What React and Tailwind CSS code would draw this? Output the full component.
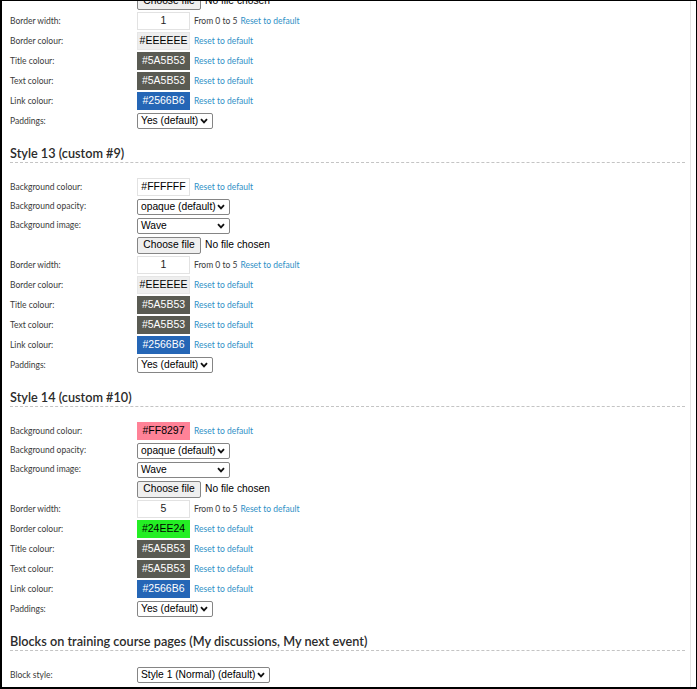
const LINK = 'text-[#2f90c6]';

function Label({ children }) {
  return <div className="w-[127px] shrink-0 text-[8.5px] text-[#3a3a3a]">{children}</div>;
}

function Reset() {
  return <span className={`ml-[4px] text-[8.5px] ${LINK}`}>Reset to default</span>;
}

function Chevron() {
  return (
    <svg width="8" height="6" viewBox="0 0 8 6" className="ml-auto shrink-0">
      <path d="M1 1.2 L4 4.4 L7 1.2" fill="none" stroke="#111" strokeWidth="1.8" />
    </svg>
  );
}

function Select({ value, width }) {
  return (
    <div
      className={`flex h-[16px] items-center rounded-[2px] border border-[#858585] bg-white pl-[3px] pr-[4px] text-[10.25px] text-black ${width}`}
      style={{ fontFamily: '"Liberation Sans", Arial, sans-serif' }}
    >
      <span className="whitespace-nowrap">{value}</span>
      <Chevron />
    </div>
  );
}

function ColourBox({ value, bg, text, border }) {
  return (
    <div
      className={`flex h-[18px] w-[53px] items-center justify-center border text-[10.5px] ${bg} ${text} ${border}`}
      style={{ fontFamily: '"Liberation Sans", Arial, sans-serif' }}
    >
      {value}
    </div>
  );
}

function Row({ label, h = 'h-[20px]', children }) {
  return (
    <div className={`flex items-center ${h}`}>
      <Label>{label}</Label>
      <div className="flex items-center">{children}</div>
    </div>
  );
}

function ColourRow({ label, value, bg, text, border }) {
  return (
    <Row label={label}>
      <ColourBox value={value} bg={bg} text={text} border={border} />
      <Reset />
    </Row>
  );
}

function FileRow() {
  return (
    <Row label="">
      <div
        className="flex h-[17px] w-[64px] items-center justify-center rounded-[2px] border border-[#858585] bg-[#efefef] text-[10.25px] text-black"
        style={{ fontFamily: '"Liberation Sans", Arial, sans-serif' }}
      >
        Choose file
      </div>
      <span
        className="ml-[4px] text-[10.25px] text-black"
        style={{ fontFamily: '"Liberation Sans", Arial, sans-serif' }}
      >
        No file chosen
      </span>
    </Row>
  );
}

function BorderWidthRow({ value }) {
  return (
    <Row label="Border width:">
      <div
        className="flex h-[18px] w-[53px] items-center justify-center border border-[#e2e2e2] bg-white text-[10.5px] text-[#222]"
        style={{ fontFamily: '"Liberation Sans", Arial, sans-serif' }}
      >
        {value}
      </div>
      <span className="ml-[4px] text-[8.5px] text-[#3a3a3a]">From 0 to 5</span>
      <span className={`ml-[3px] text-[8.5px] ${LINK}`}>Reset to default</span>
    </Row>
  );
}

function Tail({ borderWidth, borderColour }) {
  return (
    <>
      <BorderWidthRow value={borderWidth} />
      <ColourRow label="Border colour:" {...borderColour} />
      <ColourRow label="Title colour:" value="#5A5B53" bg="bg-[#5a5b53]" text="text-white" border="border-[#5a5b53]" />
      <ColourRow label="Text colour:" value="#5A5B53" bg="bg-[#5a5b53]" text="text-white" border="border-[#5a5b53]" />
      <ColourRow label="Link colour:" value="#2566B6" bg="bg-[#2566b6]" text="text-white" border="border-[#2566b6]" />
      <Row label="Paddings:">
        <Select value="Yes (default)" width="w-[76px]" />
      </Row>
    </>
  );
}

function Heading({ children }) {
  return (
    <div className="mb-[14px] h-[32px] border-b border-dashed border-[#c4c4c4] pt-[14px]">
      <div className="text-[12.7px] font-semibold leading-[16px] text-[#2b2b2b]">{children}</div>
    </div>
  );
}

function StyleSection({ title, bgColour, borderWidth, borderColour }) {
  return (
    <>
      <Heading>{title}</Heading>
      <ColourRow label="Background colour:" {...bgColour} />
      <Row label="Background opacity:" h="h-[19px]">
        <Select value="opaque (default)" width="w-[93px]" />
      </Row>
      <Row label="Background image:" h="h-[19px]">
        <Select value="Wave" width="w-[93px]" />
      </Row>
      <FileRow />
      <Tail borderWidth={borderWidth} borderColour={borderColour} />
    </>
  );
}

export default function App() {
  const grey = { value: '#EEEEEE', bg: 'bg-[#eeeeee]', text: 'text-black', border: 'border-[#e6e6e6]' };
  return (
    <div
      className="h-[689px] w-[697px] overflow-hidden border-t border-r border-b-2 border-l-2 border-black bg-white"
      style={{ fontFamily: 'Lato, "Noto Sans", sans-serif' }}
    >
      <div className="h-full w-[689px] overflow-hidden border-r border-[#e4e4e4]">
        <div className="-mt-[10px] pl-[8px] pr-[5px]">
          <FileRow />
          <Tail borderWidth="1" borderColour={grey} />

          <StyleSection
            title="Style 13 (custom #9)"
            bgColour={{ value: '#FFFFFF', bg: 'bg-white', text: 'text-black', border: 'border-[#e2e2e2]' }}
            borderWidth="1"
            borderColour={grey}
          />

          <StyleSection
            title="Style 14 (custom #10)"
            bgColour={{ value: '#FF8297', bg: 'bg-[#ff8297]', text: 'text-black', border: 'border-[#ff8297]' }}
            borderWidth="5"
            borderColour={{ value: '#24EE24', bg: 'bg-[#24ee24]', text: 'text-black', border: 'border-[#24ee24]' }}
          />

          <Heading>Blocks on training course pages (My discussions, My next event)</Heading>
          <Row label="Block style:">
            <Select value="Style 1 (Normal) (default)" width="w-[133px]" />
          </Row>
        </div>
      </div>
    </div>
  );
}
